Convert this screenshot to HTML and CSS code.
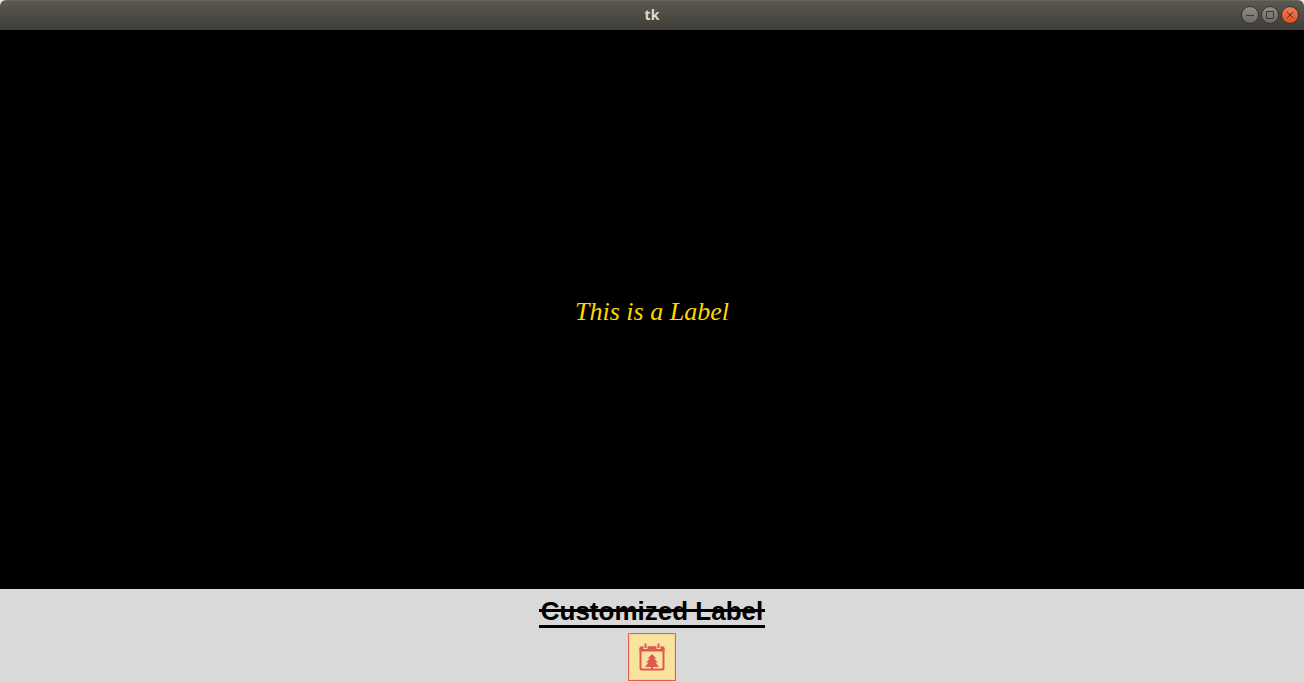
FILE: index.html
```html
<!DOCTYPE html>
<html lang="en">
<head>
<meta charset="utf-8">
<title>tk</title>
<link rel="stylesheet" href="styles.css">
</head>
<body>
<div class="window">
  <header class="titlebar">
    <h1 class="title">tk</h1>
    <div class="controls">
      <button class="control" type="button" aria-label="Minimize"><svg viewBox="0 0 18 18"><path d="M5 9.500h8"/></svg></button>
      <button class="control" type="button" aria-label="Maximize"><svg viewBox="0 0 18 18"><path d="M5.500 5.500h7v7h-7z"/></svg></button>
      <button class="control close" type="button" aria-label="Close"><svg viewBox="0 0 18 18"><path d="M6 6l6 6M12 6l-6 6"/></svg></button>
    </div>
  </header>
  <main class="content">
    <div class="screen"><p class="label">This is a Label</p></div>
    <p class="custom">Customized Label</p>
    <svg class="picture" viewBox="0 0 48 48" role="img" aria-label="Calendar with a tree">
      <rect width="48" height="48" fill="#e2604f"/>
      <rect x="1" y="1" width="46" height="46" fill="#fae39f"/>
      <rect x="1.500" y="1.500" width="45" height="45" fill="none" stroke="#f3c48a" stroke-dasharray="1 1"/>
      <rect x="12.500" y="14.500" width="23" height="22" rx="1.500" fill="none" stroke="#de5a4e" stroke-width="2"/>
      <path d="M11.500 15q0-1.500 1.500-1.500h22q1.500 0 1.500 1.500v3.500h-25z" fill="#de5a4e"/>
      <path d="M17.500 10v6M30.500 10v6" stroke="#fae39f" stroke-width="4"/>
      <path d="M17.500 10.500v4.500M30.500 10.500v4.500" stroke="#de5a4e" stroke-width="2"/>
      <path d="M24 21l4.500 4.500H26l4 4h-2.500l3.500 4.500H25v2h-2v-2h-6l3.500-4.500H18l4-4h-2.500z" fill="#de5a4e"/>
    </svg>
  </main>
</div>
</body>
</html>
```
FILE: styles.css
```css
* { box-sizing: border-box; }
body { margin: 0; background: #e8e8ec; }
.window {
  display: flex;
  flex-direction: column;
  min-height: 100vh;
  border-radius: 6px 6px 0 0;
  overflow: hidden;
}
.titlebar {
  display: grid;
  grid-template-columns: 1fr auto 1fr;
  align-items: center;
  height: 30px;
  padding: 0 5px;
  background: linear-gradient(#69665e 1px, #5b5850 1px, #3e3d38);
}
.title {
  grid-column: 2;
  margin: 0;
  color: #dfdbd2;
  font: bold 14px/18px "Noto Sans", "Open Sans", sans-serif;
}
.controls { display: flex; justify-content: flex-end; gap: 2px; }
.control {
  width: 18px;
  height: 18px;
  padding: 0;
  border: 1px solid #33322e;
  border-radius: 50%;
  background: linear-gradient(#8f8d84, #6b6962);
}
.control svg {
  display: block;
  width: 18px;
  height: 18px;
  margin: -1px;
  fill: none;
  stroke: #393832;
}
.close { background: linear-gradient(#f47c54, #e3501f); }
.content {
  flex: 1;
  display: flex;
  flex-direction: column;
  align-items: center;
  padding-bottom: 1px;
  background: #d9d9d9;
}
.screen {
  flex: 1;
  align-self: stretch;
  display: grid;
  place-items: center;
  padding-top: 4px;
  background: #000;
}
.label {
  margin: 0;
  color: #ffd700;
  font: italic 26px/30px "Liberation Serif", serif;
}
.custom {
  margin: 6px 0 5px;
  padding: 0 2px 1px;
  color: #000;
  font: bold 26px/32px "Liberation Sans", sans-serif;
  background:
    linear-gradient(#000, #000) 0 14px / 100% 3px no-repeat,
    linear-gradient(#000, #000) 0 30px / 100% 3px no-repeat;
}
.picture { display: block; width: 48px; height: 48px; }
```
